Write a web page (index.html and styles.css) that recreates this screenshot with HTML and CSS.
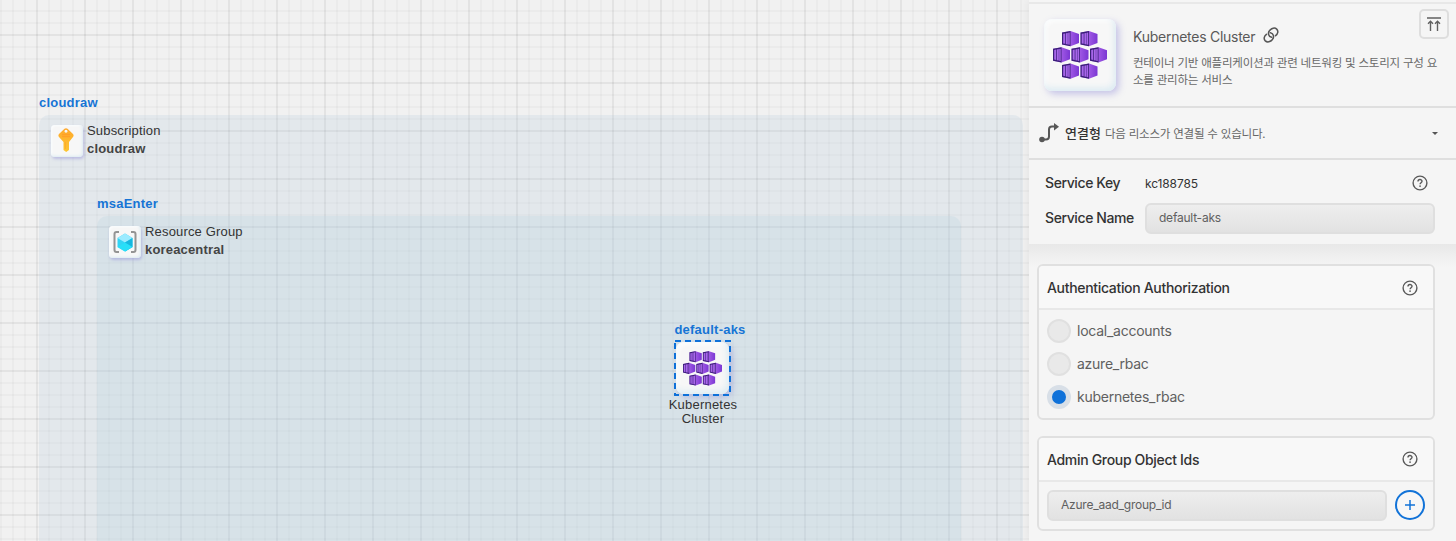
FILE: index.html
```
<!DOCTYPE html>
<html lang="ko">
<head>
<meta charset="utf-8">
<title>Cloudraw</title>
<link rel="stylesheet" href="styles.css">
</head>
<body>
<svg class="defs" width="0" height="0" aria-hidden="true">
  <defs>
    <linearGradient id="purple" x1="0" x2="1"><stop offset="0" stop-color="#b77af4"/><stop offset=".45" stop-color="#a35be6"/><stop offset="1" stop-color="#7b37d3"/></linearGradient>
    <linearGradient id="gold" x1="0" y1="0" x2="0" y2="1"><stop offset="0" stop-color="#ffa82b"/><stop offset="1" stop-color="#fcc632"/></linearGradient>
    <g id="box">
      <path d="M0 1.500 8.500 0 17 3v9l-8.500 3.300L0 13.500z" fill="url(#purple)"/>
      <path d="M0 1.500 8.500 0v15.300L0 13.500z" fill="#3b1f78"/>
      <path d="M1.200 2.800 3.200 2.400v10.400l-2-.4zM3.900 2.300l1.900-.4v11.500l-1.900-.4zM6.200 1.800l1.500-.3v12.300l-1.500-.3z" fill="#a866ea"/>
    </g>
    <symbol id="aks" viewBox="0 0 54 48">
      <use href="#box" x="9"/><use href="#box" x="27.500"/>
      <use href="#box" y="16.200"/><use href="#box" x="18.500" y="16.200"/><use href="#box" x="37" y="16.200"/>
      <use href="#box" x="9" y="32.400"/><use href="#box" x="27.500" y="32.400"/>
    </symbol>
    <symbol id="help" viewBox="0 0 16 16">
      <circle cx="8" cy="8" r="6.900" fill="none" stroke="#595959" stroke-width="1.400"/>
      <path d="M6 6.500c0-2.600 4-2.600 4-.2 0 1.500-1.900 1.500-1.900 3" fill="none" stroke="#595959" stroke-width="1.400"/>
      <rect x="7.300" y="10.400" width="1.500" height="1.500" fill="#595959"/>
    </symbol>
  </defs>
</svg>
<div class="app">
  <main class="canvas">
    <section class="zone zone-sub">
      <div class="zone-name">cloudraw</div>
      <div class="tile tile-sm">
        <svg class="key-icon" width="16" height="24" viewBox="0 0 16 24"><path fill="url(#gold)" fill-rule="evenodd" d="M6.500.7Q8-.4 9.500.7L15 6q1.200 1.400 0 2.900L11 14v8L8.200 24 5.500 22v-8L1 8.900Q-.2 7.400 1 6zM8 1.700a1.500 1.500 0 1 0 .01 0z"/><path d="M4.500 6.500h7M4.500 8.600h7" stroke="#ff9f28" stroke-width="1.300" stroke-linecap="round"/><path d="M7.400 14v7" stroke="#ffa62a" stroke-width=".8"/></svg>
      </div>
      <div class="caption"><span>Subscription</span><b>cloudraw</b></div>
    </section>
    <section class="zone zone-group">
      <div class="zone-name">msaEnter</div>
      <div class="tile tile-sm">
        <svg width="24" height="22" viewBox="0 0 24 22"><path d="M6 1H3.500Q1.500 1 1.500 3v16q0 2 2 2H6M18 1h2.500q2 0 2 2v16q0 2-2 2H18" fill="none" stroke="#949494" stroke-width="2"/><path d="M12 2.500 19.500 7v9L12 20.500 4.500 16V7z" fill="#32d4f5"/><path d="M12 2.500 19.500 7 12 11.500 4.500 7z" fill="#9cebff"/><path d="M12 11.500 19.500 7v9L12 20.500z" fill="#17b7df"/><path d="M12 11.500 19.500 16 12 20.500 4.500 16z" fill="#28dff8"/></svg>
      </div>
      <div class="caption"><span>Resource Group</span><b>koreacentral</b></div>
    </section>
    <section class="node">
      <div class="node-name">default-aks</div>
      <div class="selection">
        <div class="tile tile-md"><svg width="39" height="35"><use href="#aks"/></svg></div>
        <svg class="marquee" width="57" height="56"><rect x="1" y="1" width="55" height="54" fill="none" stroke="#0e71d9" stroke-width="2" stroke-dasharray="6 4"/></svg>
      </div>
      <div class="node-label">Kubernetes<br>Cluster</div>
    </section>
  </main>
  <aside class="panel">
    <header class="head">
      <div class="tile tile-lg"><svg width="54" height="48"><use href="#aks"/></svg></div>
      <div class="head-text">
        <div class="title"><span>Kubernetes Cluster</span>
          <svg width="16" height="16" viewBox="0 0 16 16" fill="none" stroke="#555" stroke-width="1.500" stroke-linecap="round"><path d="M8.600 10.200C5.200 9.500 4.600 5.800 6.600 3.500 8.600 1 11.800.3 13.700 2.100 15.600 4 15 6.800 12.600 8.700M7.400 5.800C10.800 6.500 11.400 10.200 9.400 12.500 7.400 15 4.200 15.700 2.300 13.900.4 12 1 9.200 3.400 7.300"/></svg>
        </div>
        <p class="desc">컨테이너 기반 애플리케이션과 관련 네트워킹 및 스토리지 구성 요<br>소를 관리하는 서비스</p>
      </div>
      <button class="pin" aria-label="top"><svg width="14" height="14" viewBox="0 0 14 14" fill="none" stroke="#606060" stroke-width="1.400"><path d="M0 1h14M3.500 14V4.500M1 6.700l2.500-2.500L6 6.700M10.500 14V4.500M8 6.700l2.500-2.500L13 6.700"/></svg></button>
    </header>
    <div class="links">
      <svg width="20" height="20" viewBox="0 0 20 20"><path d="M3 16.500h4q3 0 3-3v-7q0-3 3-3h3" fill="none" stroke="#575757" stroke-width="2"/><circle cx="3" cy="16.500" r="2.800" fill="#575757"/><path d="M15 0l5 3.700-5 3.800z" fill="#575757"/></svg>
      <strong>연결형</strong><span>다음 리소스가 연결될 수 있습니다.</span>
      <i class="caret"></i>
    </div>
    <div class="service">
      <div class="row"><label>Service Key</label><span class="key">kc188785</span><svg class="help" width="16" height="16"><use href="#help"/></svg></div>
      <div class="row"><label>Service Name</label><div class="field">default-aks</div></div>
    </div>
    <div class="body">
      <section class="card">
        <div class="card-head"><h3>Authentication Authorization</h3><svg class="card-help" width="16" height="16"><use href="#help"/></svg></div>
        <div class="options">
          <div class="option"><i class="radio"></i><span>local_accounts</span></div>
          <div class="option"><i class="radio"></i><span>azure_rbac</span></div>
          <div class="option"><i class="radio on"></i><span>kubernetes_rbac</span></div>
        </div>
      </section>
      <section class="card">
        <div class="card-head"><h3>Admin Group Object Ids</h3><svg width="16" height="16"><use href="#help"/></svg></div>
        <div class="entry"><div class="field">Azure_aad_group_id</div><button class="add" aria-label="add"><svg width="10" height="10" viewBox="0 0 10 10"><path d="M5 0v10M0 5h10" stroke="#1273d8" stroke-width="1.500"/></svg></button></div>
      </section>
    </div>
  </aside>
</div>
</body>
</html>
```
FILE: styles.css
```
* { box-sizing: border-box; }
body { margin: 0; overflow: hidden; font-family: Inter, "Noto Sans CJK KR", sans-serif; color: #333; }
.defs { position: absolute; }
.app { display: flex; width: 1456px; height: 541px; }
.canvas {
  position: relative; flex: 1; overflow: hidden; background-color: #f1f1f1;
  font-family: "Liberation Sans", Arial, sans-serif; font-size: 13px; letter-spacing: .1px;
  background-image:
    linear-gradient(90deg, rgba(0,0,0,.035) 2px, transparent 2px),
    linear-gradient(rgba(0,0,0,.035) 2px, transparent 2px),
    linear-gradient(90deg, rgba(0,0,0,.023) 2px, transparent 2px),
    linear-gradient(rgba(0,0,0,.023) 2px, transparent 2px);
  background-size: 48px 48px, 48px 48px, 12px 12px, 12px 12px;
  background-position: 36px 34px, 36px 34px, 0 10px, 0 10px;
}
.zone { position: absolute; display: flex; gap: 4px; padding: 10px 12px; border-radius: 10px; }
.zone-sub { left: 39px; top: 115px; width: 984px; height: 600px; background: rgba(173,202,220,.2); }
.zone-group { left: 97px; top: 216px; width: 864px; height: 600px; background: rgba(168,206,222,.2); }
.zone-name { position: absolute; left: 0; top: -20px; line-height: 15px; color: #1674d5; font-weight: 700; letter-spacing: .22px; }
.caption { display: flex; flex-direction: column; line-height: 18px; margin-top: -3px; letter-spacing: .17px; }
.caption b { color: #444; }
.tile {
  display: flex; align-items: center; justify-content: center; flex: none; background: #f7f7f7; border-radius: 8px;
  box-shadow: 3px 3px 7px rgba(125,120,210,.4), inset -2px -3px 6px #dcebf2, inset 2px 2px 5px #fff;
}
.tile-sm { width: 32px; height: 32px; border-radius: 4px; box-shadow: 1px 2px 3px rgba(125,120,210,.38), inset -1px -1px 3px #dcebf2, inset 1px 1px 2px #fff; }
.key-icon { margin: -2px 2px 0 0; }
.tile-md { width: 53px; height: 52px; }
.tile-lg { width: 72px; height: 72px; }
.node { position: absolute; left: 652px; top: 322px; width: 102px; display: flex; flex-direction: column; align-items: center; }
.node-name { color: #1674d5; font-weight: 700; line-height: 15px; margin: 0 0 3px 14px; letter-spacing: .23px; }
.selection { position: relative; width: 57px; height: 56px; padding: 2px; margin-right: 1px; }
.marquee { position: absolute; left: 0; top: 0; }
.node-label { text-align: center; line-height: 14px; margin-top: 2px; letter-spacing: .22px; }
.panel { position: relative; width: 427px; flex: none; background: #f5f5f5; box-shadow: -2px 0 8px rgba(0,0,0,.05); }
.head { position: relative; display: flex; gap: 17px; height: 108px; margin: 0; padding: 17px 15px 0; border-bottom: 2px solid #dfdfdf; }
.head::before { content: ""; position: absolute; left: 0; right: 0; top: 2px; height: 2px; background: #e8e8e8; }
.head .tile { margin-top: 2px; }
.title { display: flex; gap: 8px; align-items: flex-start; height: 37px; padding-top: 10px; font-size: 14px; line-height: 20px; letter-spacing: -.26px; color: #595959; }
.desc { margin: 0; white-space: nowrap; font: 11.500px/17px "Noto Sans CJK KR", sans-serif; letter-spacing: -.21px; color: #686868; }
.pin { position: absolute; right: 7px; top: 9px; width: 30px; height: 30px; padding: 0; border: 2px solid #dedede; border-radius: 5px; background: #f5f5f5; display: grid; place-items: center; }
.links { display: flex; align-items: center; height: 52px; padding: 0 18px 0 10px; border-bottom: 2px solid #dfdfdf; font-family: "Noto Sans CJK KR", sans-serif; }
.links strong { margin: -2px 4px 0 6px; font-size: 13px; font-weight: 500; }
.links span { font-size: 11.500px; letter-spacing: -.2px; color: #666; white-space: nowrap; }
.caret { margin-left: auto; border: 3px solid transparent; border-top: 3px solid #555; border-bottom: 0; }
.service { height: 84px; padding: 8px 21px 0 16px; }
.row { display: flex; align-items: center; height: 30px; margin-bottom: 5px; }
.row label { width: 100px; font-size: 14px; font-weight: 500; letter-spacing: -.4px; padding-bottom: 1px; }
.key { font-size: 12px; letter-spacing: -.12px; }
.help { margin-left: auto; margin-right: 7px; }
.field { flex: 1; height: 31px; padding: 0 12px; border: 2px solid #dfdfdf; border-radius: 6px; background: linear-gradient(#eeeeee, #e2e2e2); color: #606060; font-size: 12px; letter-spacing: -.23px; line-height: 25px; }
.body { padding: 20px 21px 0 8px; background: linear-gradient(#e8e8e8, #efefef 12px, #f5f5f5 24px); }
.card { border: 2px solid #e0e0e0; border-radius: 6px; margin-bottom: 16px; background: #f5f5f5; overflow: hidden; }
.card-head { display: flex; align-items: center; justify-content: space-between; height: 44px; padding: 0 15px 0 8px; background: #f8f8f8; border-bottom: 2px solid #e8e8e8; }
.card-head h3 { margin: 0; font-size: 14px; font-weight: 500; letter-spacing: -.32px; }
.card-help { margin-top: 2px; }
.options { height: 108px; padding: 9px 8px; display: flex; flex-direction: column; gap: 9px; }
.option { display: flex; align-items: center; gap: 6px; height: 24px; font-size: 14px; letter-spacing: -.25px; color: #606060; }
.option span { padding-bottom: 2px; }
.radio { width: 24px; height: 24px; border-radius: 50%; border: 2px solid #e0e0e0; background: #e9e9e9; }
.radio.on { border: 5px solid #d8dfe7; background: #0e71d9; }
.entry { display: flex; gap: 8px; padding: 8px; height: 47px; }
.add { width: 30px; height: 30px; border: 2px solid #1273d8; border-radius: 50%; background: #f7f7f7; padding: 0; display: grid; place-items: center; }
```
